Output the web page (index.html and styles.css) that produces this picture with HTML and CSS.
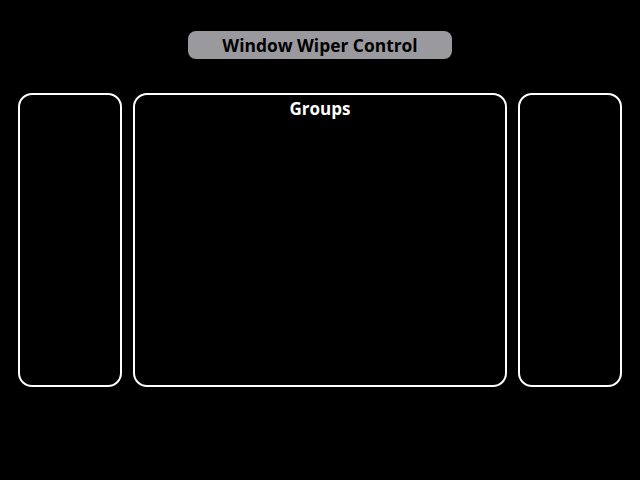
FILE: index.html
```html
<!DOCTYPE html>
<html>
<head>
<meta charset="utf-8">
<link rel="stylesheet" href="styles.css">
</head>
<body>
<div class="screen">
  <div class="title-row">
    <div class="title">Window Wiper Control</div>
  </div>
  <div class="panels">
    <div class="panel side"></div>
    <div class="panel main"><div class="panel-title">Groups</div></div>
    <div class="panel side"></div>
  </div>
</div>
</body>
</html>
```
FILE: styles.css
```css
html, body {
  margin: 0;
  padding: 0;
  background: #000;
}
.screen {
  width: 640px;
  height: 480px;
  display: flex;
  flex-direction: column;
  font-family: "Open Sans", "Noto Sans", sans-serif;
}
.title-row {
  display: flex;
  justify-content: center;
  padding-top: 31px;
}
.title {
  width: 264px;
  height: 28px;
  box-sizing: border-box;
  background: #9a999e;
  border-radius: 8px;
  color: #000;
  font-weight: 700;
  font-size: 17.4px;
  line-height: 28px;
  text-align: center;
}
.panels {
  display: flex;
  gap: 11px;
  padding: 34px 18px 0 18px;
}
.panel {
  height: 294px;
  box-sizing: border-box;
  border: 2px solid #fff;
  border-radius: 14px;
}
.side {
  width: 104px;
}
.main {
  width: 374px;
}
.panel-title {
  color: #fff;
  font-weight: 700;
  font-size: 17px;
  text-align: center;
  line-height: 24px;
  margin-top: 2px;
}
```
